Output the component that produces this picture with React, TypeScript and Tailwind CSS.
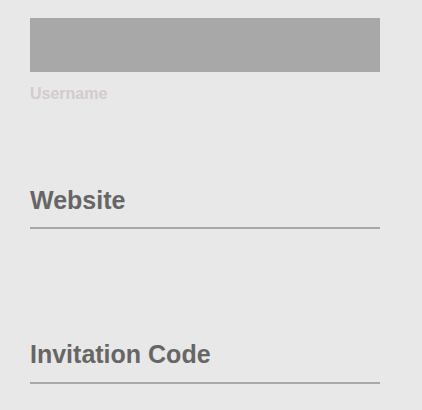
export default function App() {
  return (
    <div className="min-h-[410px] w-full bg-[#e8e8e8]" style={{ fontFamily: '"Liberation Sans", Arial, sans-serif' }}>
      <div className="w-[350px] ml-[30px] pt-[18px] flex flex-col">
        <div className="h-[54px] bg-[#a8a8a8]" />
        <div className="mt-[13px] text-[16px] leading-[18px] font-bold text-[#d3cbcd]">Username</div>
        <div className="mt-[82px] text-[25px] leading-[30px] font-bold text-[#666666]">Website</div>
        <div className="mt-[12px] h-[2px] bg-[#a8a8a8]" />
        <div className="mt-[110px] text-[25px] leading-[30px] font-bold text-[#666666]">Invitation Code</div>
        <div className="mt-[13px] h-[2px] bg-[#a8a8a8]" />
      </div>
    </div>
  );
}
